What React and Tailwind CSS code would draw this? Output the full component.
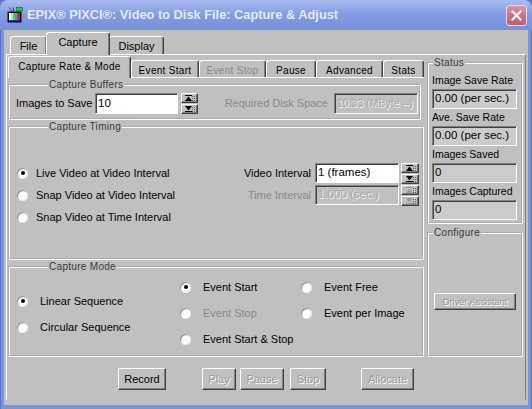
import React from "react";

// classic win98-ish bevels
const raised =
  "border border-t-white border-l-white border-r-[#404040] border-b-[#404040] shadow-[inset_-1px_-1px_0_#808080]";
const sunken =
  "border border-t-[#808080] border-l-[#808080] border-r-white border-b-white shadow-[inset_1px_1px_0_#404040]";

function TitleIcon() {
  return (
    <svg width="16" height="16" viewBox="0 0 16 16" className="shrink-0">
      <line x1="2" y1="0.5" x2="5.5" y2="4.5" stroke="#2a3c9c" strokeWidth="1" />
      <line x1="6" y1="0.5" x2="7" y2="4.5" stroke="#2a3c9c" strokeWidth="1" />
      <rect x="9.5" y="0.5" width="6" height="3.5" fill="#22c84a" stroke="#0a6a2a" strokeWidth="0.6" />
      <rect x="0.5" y="4.5" width="14" height="11" fill="#111" />
      <rect x="2" y="6" width="2" height="7" fill="#f4f4f4" />
      <rect x="4" y="6" width="2" height="7" fill="#f0e020" />
      <rect x="6" y="6" width="2" height="7" fill="#20d0e0" />
      <rect x="8" y="6" width="2" height="7" fill="#30c040" />
      <rect x="10" y="6" width="1.5" height="7" fill="#d030c0" />
      <rect x="11.5" y="6" width="1.5" height="7" fill="#e02020" />
      <rect x="2" y="13" width="11" height="1" fill="#2030d0" />
    </svg>
  );
}

function CloseButton() {
  return (
    <div className="ml-auto w-[21px] h-[21px] rounded-[3px] border border-[#e8d6e0] bg-gradient-to-b from-[#d89aa6] via-[#c87484] to-[#b86272] flex items-center justify-center">
      <svg width="11" height="11" viewBox="0 0 11 11">
        <path d="M1.5 1.5 L9.5 9.5 M9.5 1.5 L1.5 9.5" stroke="#fff" strokeWidth="2" strokeLinecap="square" />
      </svg>
    </div>
  );
}

function Tab({ children, active, className = "", text = "" }) {
  return (
    <div
      className={`relative flex items-center justify-center bg-[#c0c0c0] border-t border-l border-r border-t-white border-l-white border-r-[#404040] rounded-t-[3px] shadow-[inset_-1px_0_0_#808080] ${
        active ? "z-10 -mb-px" : ""
      } ${className}`}
    >
      <span className={text}>{children}</span>
    </div>
  );
}

function Group({ label, className = "", children }) {
  return (
    <fieldset
      className={`min-w-0 border-2 border-white [--tw-border-style:groove] [border-style:groove] ${className}`}
    >
      <legend className="ml-[38px] px-[1px] text-[10px] leading-[12px] tracking-[0.3px] text-[#3a3a3a]">
        {label}
      </legend>
      {children}
    </fieldset>
  );
}

function Radio({ checked }) {
  return (
    <span className="w-[11px] h-[11px] shrink-0 rounded-full bg-white shadow-[inset_1px_1px_1px_#8a8a8a,inset_-1px_-1px_0_#e8e8e8] flex items-center justify-center">
      {checked && <span className="w-[4px] h-[4px] rounded-full bg-black" />}
    </span>
  );
}

function Arrow({ up, disabled }) {
  const c = disabled ? "#9a9a9a" : "#000";
  return (
    <svg width="15" height="8" viewBox="0 0 15 8">
      {up ? (
        <>
          <rect x="3" y="1" width="7" height="1" fill={c} />
          <polygon points="3,7 6.5,2.5 10,7" fill={c} />
        </>
      ) : (
        <>
          <polygon points="3,1 6.5,5.5 10,1" fill={c} />
          <rect x="3" y="6" width="7" height="1" fill={c} />
        </>
      )}
      {[10, 12, 14].map((x) =>
        [2, 4, 6].map((y) => <rect key={`${x}-${y}`} x={x} y={y} width="1" height="1" fill="#606060" />)
      )}
    </svg>
  );
}

function Spin({ disabled, className = "" }) {
  return (
    <div className={`flex flex-col h-[21px] ${className}`}>
      <div className={`h-[10px] bg-[#c0c0c0] flex items-center justify-center ${raised}`}>
        <Arrow up disabled={disabled} />
      </div>
      <div className={`h-[10px] mt-[1px] bg-[#c0c0c0] flex items-center justify-center ${raised}`}>
        <Arrow disabled={disabled} />
      </div>
    </div>
  );
}

function Field({ value, disabled, className = "", bg = "bg-white" }) {
  return (
    <div
      className={`h-[20px] flex items-center pl-[2px] text-[11.5px] whitespace-nowrap overflow-hidden ${sunken} ${
        disabled ? "bg-[#c0c0c0] text-[#a8a8a8] [text-shadow:1px_1px_0_#f4f4f4]" : `${bg} text-black`
      } ${className}`}
    >
      {value}
    </div>
  );
}

function Btn({ children, disabled, className = "" }) {
  return (
    <button
      className={`h-[22px] bg-[#c0c0c0] text-[11px] leading-none whitespace-nowrap ${raised} ${
        disabled ? "text-[#9a9a9a] [text-shadow:1px_1px_0_#fff]" : "text-black"
      } ${className}`}
    >
      {children}
    </button>
  );
}

function RadioRow({ checked, label, disabled, gap = "ml-[8px]", className = "" }) {
  return (
    <div className={`flex items-center ${className}`}>
      <Radio checked={checked} />
      <span className={`${gap} text-[11px] ${disabled ? "text-[#8a8a8a]" : "text-black"}`}>{label}</span>
    </div>
  );
}

export default function App() {
  const subTabs = [
    { label: "Event Start", w: "w-[68px]" },
    { label: "Event Stop", w: "w-[67px]", disabled: true },
    { label: "Pause", w: "w-[50px]" },
    { label: "Advanced", w: "w-[67px]" },
    { label: "Stats", w: "w-[41px]" },
  ];

  return (
    <div className="w-[532px] h-[409px] bg-[#5e76c8] font-['Liberation_Sans',Arial,sans-serif] overflow-hidden">
      <div className="w-full h-full flex flex-col rounded-t-[8px] bg-[#7b92dc] shadow-[inset_1px_0_0_#5a70c4,inset_-1px_0_0_#5a70c4]">
        {/* Title bar */}
        <div className="h-[30px] shrink-0 flex items-center pl-[7px] pr-[5px] rounded-t-[8px] bg-gradient-to-b from-[#aabdf2] via-[#829be2] to-[#7890dc]">
          <TitleIcon />
          <span className="ml-[4px] text-[12.8px] font-bold text-[#e2eafa] whitespace-nowrap">
            EPIX® PIXCI®: Video to Disk File: Capture &amp; Adjust
          </span>
          <CloseButton />
        </div>

        {/* Window body */}
        <div className="flex-1 mx-[4px] mb-[4px] bg-[#c0c0c0] flex flex-col">
          {/* Top tabs */}
          <div className="flex items-end h-[22px] mt-[2px] pl-[6px]">
            <Tab className="w-[37px] h-[18px]" text="text-[11px] pt-[1px]">File</Tab>
            <Tab active className="w-[64px] h-[23px] -mx-px" text="text-[11px] -mt-[3px]">Capture</Tab>
            <Tab className="w-[55px] h-[18px]" text="text-[11px] pt-[2px]">Display</Tab>
          </div>

          {/* Main panel */}
          <div className="ml-[2px] mr-[2px] h-[346px] border border-t-white border-l-white border-r-[#808080] border-b-[#c0c0c0] pt-px pl-px flex gap-[3px]">
            {/* Left column */}
            <div className="w-[416px] flex flex-col">
              <div className="flex items-end h-[21px]">
                <Tab active className="w-[123px] h-[22px]" text="text-[10px] tracking-[0.3px] -mt-[2px]">
                  Capture Rate &amp; Mode
                </Tab>
                {subTabs.map((t) => (
                  <Tab key={t.label} className={`${t.w} h-[17px]`} text={`text-[10px] tracking-[0.3px] pt-[2px] ${t.disabled ? "text-[#8a8a8a]" : ""}`}>
                    {t.label}
                  </Tab>
                ))}
              </div>

              <div className="border-t border-white pt-px">
                <Group label="Capture Buffers" className="h-[41px] mr-[3px]">
                  <div className="mt-[2px] h-[21px] flex items-center pl-[6px] pr-px">
                    <span className="w-[79px] text-[11px]">Images to Save</span>
                    <Field value="10" className="w-[83px] h-[21px]" />
                    <Spin className="ml-[3px] w-[17px]" />
                    <span className="flex-1 text-right pr-[6px] text-[11px] text-[#8a8a8a]">Required Disk Space</span>
                    <Field value="10.33 (MByte --)" disabled className="w-[84px] h-[21px] !text-[10.5px]" />
                  </div>
                </Group>
              </div>

              <Group label="Capture Timing" className="mt-px h-[139px]">
                <div className="mt-[29px] pl-[7px] pr-[3px]">
                  <div className="h-[22px] flex items-center">
                    <RadioRow checked label="Live Video at Video Interval" className="flex-1" />
                    <span className="text-[11px] mr-[4px]">Video Interval</span>
                    <Field value="1 (frames)" className="w-[84px]" />
                    <Spin className="ml-[2px] w-[18px] -my-px" />
                  </div>
                  <div className="h-[22px] flex items-center">
                    <RadioRow label="Snap Video at Video Interval" className="flex-1" />
                    <span className="text-[11px] mr-[4px] text-[#8a8a8a]">Time Interval</span>
                    <Field value="1.000 (sec.)" disabled className="w-[84px]" />
                    <Spin disabled className="ml-[2px] w-[18px] -my-px" />
                  </div>
                  <div className="h-[22px] flex items-center">
                    <RadioRow label="Snap Video at Time Interval" />
                  </div>
                </div>
              </Group>

              <Group label="Capture Mode" className="mt-px h-[96px]">
                <div className="mt-px flex">
                  <div className="w-[170px] pl-[7px] pt-[14px]">
                    <RadioRow checked label="Linear Sequence" gap="ml-[12px]" className="h-[26px]" />
                    <RadioRow label="Circular Sequence" gap="ml-[12px]" className="h-[26px]" />
                  </div>
                  <div className="w-[121px]">
                    <RadioRow checked label="Event Start" gap="ml-[12px]" className="h-[26px]" />
                    <RadioRow label="Event Stop" disabled gap="ml-[12px]" className="h-[26px]" />
                    <RadioRow label="Event Start & Stop" gap="ml-[12px]" className="h-[26px]" />
                  </div>
                  <div className="flex-1">
                    <RadioRow label="Event Free" gap="ml-[12px]" className="h-[26px]" />
                    <RadioRow label="Event per Image" gap="ml-[12px]" className="h-[26px]" />
                  </div>
                </div>
              </Group>

              <div className="mt-[11px] flex">
                <Btn className="ml-[110px] w-[48px]">Record</Btn>
                <Btn disabled className="ml-[36px] w-[34px]">Play</Btn>
                <Btn disabled className="ml-[4px] w-[44px]">Pause</Btn>
                <Btn disabled className="ml-[6px] w-[36px]">Stop</Btn>
                <Btn disabled className="ml-[35px] w-[53px]">Allocate</Btn>
              </div>
            </div>

            {/* Right column */}
            <div className="w-[96px] flex flex-col">
              <Group label="Status" className="mt-px h-[167px] [&>legend]:ml-[4px]">
                <div className="pt-[3px] pl-[3px]">
                  {[
                    ["Image Save Rate", "0.00 (per sec.)"],
                    ["Ave. Save Rate", "0.00 (per sec.)"],
                    ["Images Saved", "0"],
                    ["Images Captured", "0"],
                  ].map(([l, v]) => (
                    <div key={l}>
                      <div className="h-[17px] flex items-center text-[10.5px] whitespace-nowrap">{l}</div>
                      <Field value={v} bg="bg-[#cbcbcb]" className="w-[85px]" />
                    </div>
                  ))}
                </div>
              </Group>
              <Group label="Configure" className="mt-[3px] h-[130px] [&>legend]:ml-[4px]">
                <div className="mt-[49px] pl-[5px]">
                  <Btn disabled className="w-[82px] !h-[17px] !text-[9.5px] tracking-[-0.1px]">Driver Assistant</Btn>
                </div>
              </Group>
            </div>
          </div>
        </div>
      </div>
    </div>
  );
}
